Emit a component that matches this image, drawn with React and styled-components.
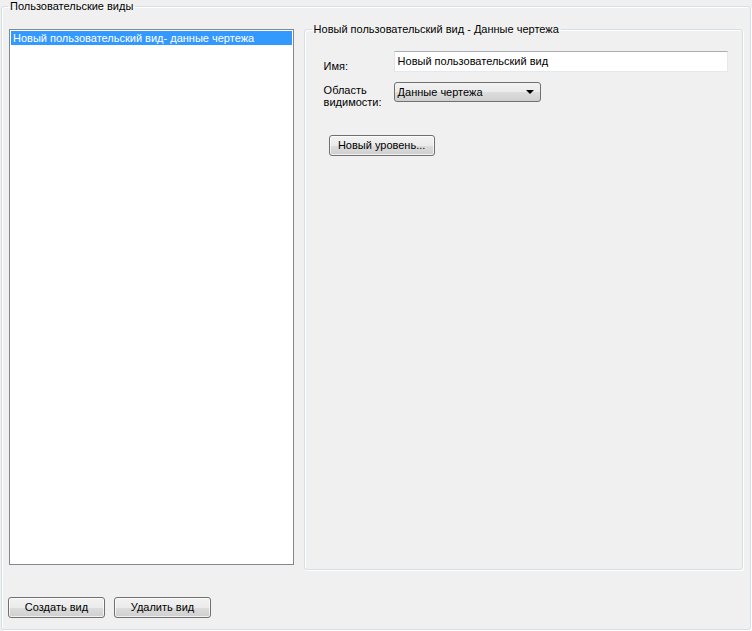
import styled, { createGlobalStyle } from "styled-components";

const GlobalStyle = createGlobalStyle`
    html, body {
        margin: 0;
        padding: 0;
        background: #f0f0f0;
    }
    body {
        font-family: "Liberation Sans", Arial, sans-serif;
        font-size: 11px;
        color: #000;
    }
`;

const Window = styled.div`
    width: 752px;
    height: 631px;
    box-sizing: border-box;
    padding: 0 1px;
    background: #f0f0f0;
    overflow: hidden;
`;

const GroupBox = styled.fieldset`
    margin: 0;
    box-sizing: border-box;
    border: 1px solid #d5dfe5;
    box-shadow: inset 1px 1px 0 #fff, 1px 1px 0 #fff;
    border-radius: 3px;
    min-width: 0;
`;

const Outer = styled(GroupBox)`
    width: 750px;
    height: 630px;
    padding: 10px 7px 11px 7px;
    display: flex;
    flex-direction: column;
`;

const Legend = styled.legend`
    padding: 0 2px;
    margin-left: ${(p) => p.$indent}px;
    line-height: ${(p) => p.$lh}px;
    color: #000;
    font-size: 11px;
`;

const Row = styled.div`
    display: flex;
    gap: 10px;
`;

const List = styled.div`
    margin-top: 7px;
    width: 285px;
    height: 536px;
    box-sizing: border-box;
    border: 1px solid #828790;
    background: #fff;
    padding: 1px;
`;

const ListItem = styled.div`
    height: 14px;
    line-height: 14px;
    padding-left: 2px;
    background: ${(p) => (p.$selected ? "#3399ff" : "transparent")};
    color: ${(p) => (p.$selected ? "#fff" : "#000")};
    white-space: nowrap;
`;

const Details = styled(GroupBox)`
    width: 440px;
    height: 548px;
    padding: 15px 14px 0 19px;
`;

const Form = styled.div`
    display: grid;
    grid-template-columns: 70px 1fr;
    row-gap: 10px;
    align-items: start;
`;

const Label = styled.div`
    padding-top: ${(p) => p.$top || 0}px;
    line-height: 12px;
`;

const TextInput = styled.div`
    height: 21px;
    box-sizing: border-box;
    border: 1px solid #abadb3;
    border-color: #abadb3 #e3e9ef #e3e9ef #e2e3ea;
    background: #fff;
    padding: 0 3px;
    line-height: 19px;
`;

const Combo = styled.div`
    width: 147px;
    height: 20px;
    box-sizing: border-box;
    border: 1px solid #707070;
    border-radius: 3px;
    background: linear-gradient(#f2f2f2 0%, #ebebeb 50%, #dddddd 51%, #cfcfcf 100%);
    display: flex;
    align-items: center;
    justify-content: space-between;
    padding: 0 6px 0 3px;
    line-height: 18px;
`;

const Arrow = styled.span`
    width: 0;
    height: 0;
    border-left: 4px solid transparent;
    border-right: 4px solid transparent;
    border-top: 4px solid #000;
`;

const Button = styled.div`
    width: ${(p) => p.$w}px;
    height: 21px;
    box-sizing: border-box;
    border: 1px solid #707070;
    border-radius: 3px;
    background: linear-gradient(#f2f2f2 0%, #ebebeb 50%, #dddddd 51%, #cfcfcf 100%);
    box-shadow: inset 0 0 0 1px rgba(255, 255, 255, 0.7);
    display: flex;
    align-items: center;
    justify-content: center;
    line-height: 19px;
    color: #000;
`;

const LevelButton = styled(Button)`
    margin: 27px 0 0 5px;
`;

const Footer = styled.div`
    display: flex;
    gap: 9px;
    margin: auto 0 0 -1px;
`;

export default function App() {
    return (
        <Window>
            <GlobalStyle />
            <Outer>
                <Legend $indent={-1} $lh={12}>Пользовательские виды</Legend>
                <Row>
                    <List>
                        <ListItem $selected>Новый пользовательский вид- данные чертежа</ListItem>
                    </List>
                    <Details>
                        <Legend $indent={-12} $lh={14}>Новый пользовательский вид - Данные чертежа</Legend>
                        <Form>
                            <Label $top={9}>Имя:</Label>
                            <TextInput>Новый пользовательский вид</TextInput>
                            <Label $top={2}>Область<br />видимости:</Label>
                            <Combo>
                                <span>Данные чертежа</span>
                                <Arrow />
                            </Combo>
                        </Form>
                        <LevelButton $w={106}>Новый уровень...</LevelButton>
                    </Details>
                </Row>
                <Footer>
                    <Button $w={97}>Создать вид</Button>
                    <Button $w={97}>Удалить вид</Button>
                </Footer>
            </Outer>
        </Window>
    );
}
